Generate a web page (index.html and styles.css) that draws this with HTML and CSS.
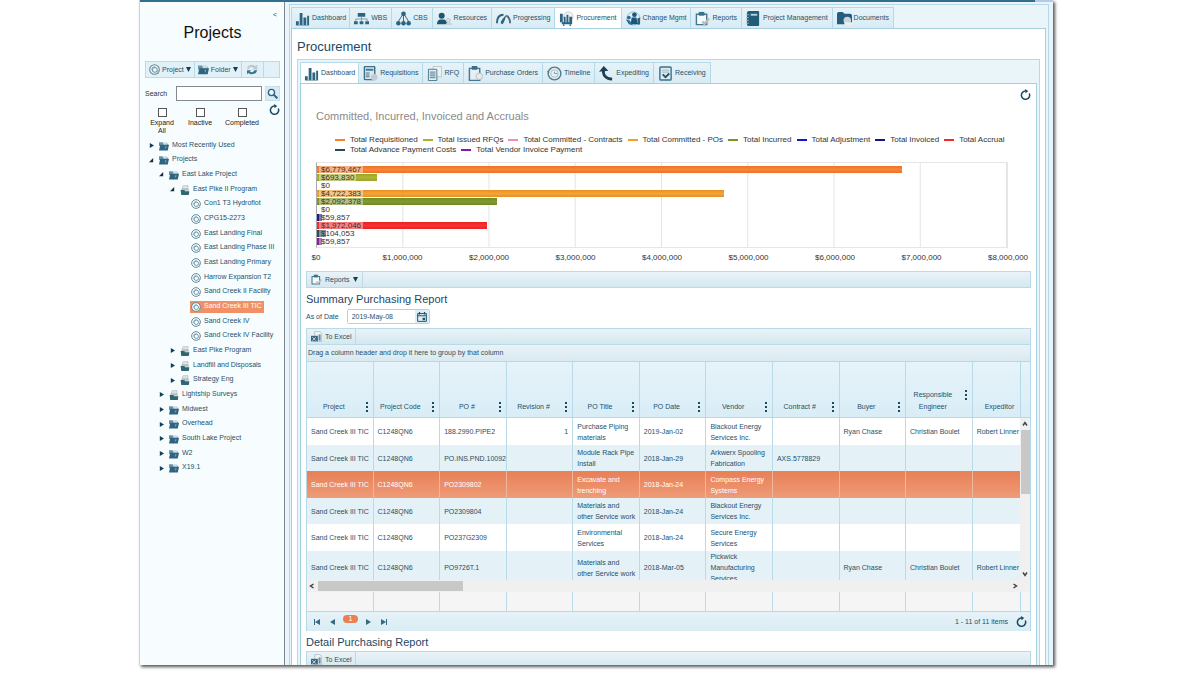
FILE: index.html
```html
<!DOCTYPE html>
<html lang="en">
<head>
<meta charset="utf-8">
<title>Procurement</title>
<link rel="stylesheet" href="styles.css">
</head>
<body>
<svg class="defs" aria-hidden="true">
  <symbol id="i-bars" viewBox="0 0 16 16"><path fill="#2b6380" d="M1 11h3v4H1zM5 2h3v13H5zM9 7h3v8H9zM13 5h2v10h-2z"/><path fill="#8fb0bd" d="M1 15h14v1H1z"/></symbol>
  <symbol id="i-wbs" viewBox="0 0 16 16"><path fill="#2b6380" d="M4 2h8v4H4zM0 11h4v3H0zM6 11h4v3H6zM12 11h4v3h-4z"/><path fill="none" stroke="#7c98a5" d="M8 6v5M2 11V8.500h12V11"/></symbol>
  <symbol id="i-cbs" viewBox="0 0 16 16"><path fill="none" stroke="#2b6380" d="M8 4v8M7 4L2 12M9 4l5 8"/><circle cx="8" cy="3" r="2.500" fill="#2b6380"/><circle cx="2.500" cy="13" r="2.400" fill="#2b6380"/><circle cx="8" cy="13" r="2.400" fill="#2b6380"/><circle cx="13.500" cy="13" r="2.400" fill="#2b6380"/></symbol>
  <symbol id="i-res" viewBox="0 0 16 16"><circle cx="5" cy="5" r="3.200" fill="#1f566c"/><path fill="#1f566c" d="M0 14q0-5 4-5h3q3 0 4 5z"/><circle cx="12" cy="10" r="2" fill="#dce6ea" stroke="#aebfc7"/><path fill="#c8d6dc" d="M9 15q1-3 4-3t3 3z"/></symbol>
  <symbol id="i-prog" viewBox="0 0 16 16"><path fill="none" stroke="#2b6380" stroke-width="2" d="M1 13Q1 4 8 4"/><path fill="none" stroke="#567" stroke-width="2" d="M11 5q4 2 4 8"/><path fill="#2b6380" d="M5 13q0-3 6-9-2 8-4 10z"/></symbol>
  <symbol id="i-proc" viewBox="0 0 16 16"><circle cx="10" cy="6" r="5" fill="#f1f4f6" stroke="#c3ced4"/><path fill="#2b6380" d="M1 3h3v9H1zM5 6h2v6H5zM8 4h2v8H8zM11 6h3v6h-3zM3 12h11v2H3z"/><circle cx="5" cy="15" r="1" fill="#2b6380"/><circle cx="12" cy="15" r="1" fill="#2b6380"/></symbol>
  <symbol id="i-change" viewBox="0 0 16 16"><circle cx="8" cy="8" r="7" fill="none" stroke="#9fb9c6"/><circle cx="9" cy="4" r="2.500" fill="#1d557a"/><path fill="#1d557a" d="M5 14l1-7h5l2 7z"/><circle cx="3" cy="7" r="2" fill="#2b6d95"/><path fill="#2b6d95" d="M0 9l4 1 3 5-4-1z"/><path fill="#2b6380" d="M12 8l3-1v7l-2 1z"/></symbol>
  <symbol id="i-clip" viewBox="0 0 16 16"><path fill="#f4f9fb" stroke="#47768d" stroke-width="1.500" d="M1.500 3.500h11v11h-11z"/><path fill="#39708b" d="M4 1h6v4H4z"/><path fill="none" stroke="#b9bcc4" stroke-width="2.500" d="M8 11l2 3 5-6"/></symbol>
  <symbol id="i-book" viewBox="0 0 16 16"><path fill="#235c78" d="M3 0h10q1 0 1 1v14q0 1-1 1H3q-2 0-2-2V2q0-2 2-2z"/><path fill="#b9d5e2" d="M5 3h7v2H5z"/><path stroke="#9dbdcc" d="M0 4h3M0 7h3M0 10h3M0 13h3"/></symbol>
  <symbol id="i-docs" viewBox="0 0 16 16"><path fill="#235f7d" d="M0 3q0-2 2-2h4l2 2h6q2 0 2 2v9H0z"/><circle cx="11" cy="10" r="4" fill="#cdd4d9"/><path fill="#eceff1" d="M8 12h8v3H8z"/></symbol>
  <symbol id="i-form" viewBox="0 0 16 16"><rect x="1.500" y=".500" width="11" height="14" rx="1" fill="#d8e9f1" stroke="#3d7089" stroke-width="1.500"/><path fill="#49788f" d="M3 3h8v2H3zM3 7h4v1H3zM3 9h4v1H3zM3 11h4v1H3z"/><circle cx="12" cy="12" r="3.500" fill="#c3ccd2"/></symbol>
  <symbol id="i-rfq" viewBox="0 0 16 16"><path fill="#eef2f4" stroke="#bac6cc" d="M6.500.500h9v11h-9z"/><path fill="#e4f0f5" stroke="#47768d" d="M1.500 3.500h9v12h-9z"/><path stroke="#47768d" d="M3 6.500h6M3 8.500h6M3 10.500h6M3 12.500h6"/></symbol>
  <symbol id="i-po" viewBox="0 0 16 16"><path fill="#e4f0f5" stroke="#47768d" stroke-width="1.500" d="M1.500 2.500h11v13h-11z"/><path fill="#39708b" d="M4 0h6v4H4z"/><circle cx="12" cy="11" r="3.500" fill="#e8eaec" stroke="#b5bfc4"/></symbol>
  <symbol id="i-time" viewBox="0 0 16 16"><circle cx="8" cy="8" r="6.800" fill="none" stroke="#53788a" stroke-width="1.500"/><circle cx="8" cy="8" r="4" fill="#e6eff3" stroke="#a7bcc5"/><path fill="none" stroke="#7c98a5" d="M8 6v2h3"/><path fill="none" stroke="#53788a" d="M0 5l2 2"/></symbol>
  <symbol id="i-exp" viewBox="0 0 16 16"><path fill="none" stroke="#1f4054" stroke-width="3" d="M5 3q-2 10 9 11"/><path fill="#1f4054" d="M0 6l5-6 5 5z"/></symbol>
  <symbol id="i-recv" viewBox="0 0 16 16"><rect x="2" y="1" width="12" height="14" rx="1" fill="#dcebf2" stroke="#3d7089" stroke-width="1.500"/><path stroke="#a3bac5" d="M4 4.500h8M4 6.500h8"/><path fill="none" stroke="#1f566c" stroke-width="2" d="M5 9l3 3 4-4"/></symbol>
  <symbol id="i-refresh" viewBox="0 0 16 16"><path fill="none" stroke="#1a4a62" stroke-width="2.200" d="M8 3a6 6 0 1 0 5.500 3.500"/><path fill="#1a4a62" d="M7 0l5 3-4 3z"/></symbol>
  <symbol id="i-sync" viewBox="0 0 16 16"><path fill="#bfcad0" d="M0 7Q1 1 7 1q4 0 5 2l3-2v7H8l2-2Q7 3 4 5L2 8z"/><path fill="#3c7590" d="M15 9q-2 6-8 6-3 0-5-2l-2 2V9h6l-2 2q4 3 7-2z"/></symbol>
  <symbol id="i-proj" viewBox="0 0 16 16"><circle cx="8" cy="8" r="7" fill="#f4fafc" stroke="#5d8698" stroke-width="1.500"/><circle cx="8.500" cy="8.500" r="3.500" fill="none" stroke="#6d94a5" stroke-width="1.500"/><path fill="none" stroke="#8aa9b6" stroke-width="1.500" d="M4 9q0-5 5-5M13 9l1 5"/></symbol>
  <symbol id="i-folder" viewBox="0 0 16 16"><path fill="#6b93a7" d="M0 2h6l1 2h7v4H0z"/><path fill="#c8dde6" d="M7 2h6v5H7z"/><path fill="#2f647f" d="M2 6h14l-2 9H0z"/><path fill="#77a2b6" d="M9 9l3-1-1 5z"/></symbol>
  <symbol id="i-prog2" viewBox="0 0 16 16"><path fill="#dde4e8" stroke="#abb7bd" d="M5 1h8l-1 6H3z"/><path fill="#b5c0c6" d="M3 5h11v4H2z"/><path fill="#2f6670" d="M1 8h6l1 2h7l-1 6H2z"/></symbol>
  <symbol id="i-search" viewBox="0 0 16 16"><circle cx="6.500" cy="6.500" r="4.500" fill="#edf7fb" stroke="#2d6480" stroke-width="2"/><path stroke="#2d6480" stroke-width="3" d="M10 10l5 5"/></symbol>
  <symbol id="i-excel" viewBox="0 0 16 16"><path fill="#eef3f6" stroke="#9db0bb" d="M5.500.500h7l3 3v12h-10z"/><path fill="#376782" d="M0 7h10v8H0z"/><path stroke="#fff" d="M2 9l5 5M7 9l-5 5"/><path fill="#6d8da0" d="M11 5h3v9h-3z"/></symbol>
  <symbol id="i-cal" viewBox="0 0 16 16"><path fill="none" stroke="#1f4f66" stroke-width="1.500" d="M1 2.500h14v12.500H1zM1 6h14"/><path fill="#1f4f66" d="M3 0h2v4H3zM11 0h2v4h-2zM9 9h4v4H9z"/></symbol>
  <symbol id="i-dots" viewBox="0 0 3 10"><path fill="#1c475c" d="M0 0h2v2H0zM0 4h2v2H0zM0 8h2v2H0z"/></symbol>
  <symbol id="i-closed" viewBox="0 0 6 6"><path fill="#123f56" d="M1 0l5 3-5 3z"/></symbol>
  <symbol id="i-open" viewBox="0 0 6 6"><path fill="#12313f" d="M5 0v5H0z"/></symbol>
  <symbol id="i-down" viewBox="0 0 6 6"><path fill="#143f54" d="M0 0h6L3 6z"/></symbol>
  <symbol id="i-next" viewBox="0 0 8 6"><path fill="#356a81" d="M1 0l5 3-5 3z"/></symbol>
  <symbol id="i-last" viewBox="0 0 8 6"><path fill="#356a81" d="M0 0l5 3-5 3zM5 0h1v6H5z"/></symbol>
  <symbol id="i-chev" viewBox="0 0 6 6"><path fill="none" stroke="#444" stroke-width="1.500" d="M1 4.500l2-3 2 3"/></symbol>
</svg>

<div class="app">
  <div class="topbar"></div>
  <div class="columns">
    <aside class="sidebar">
      <button class="collapse" aria-label="Collapse">&lt;</button>
      <h1>Projects</h1>
      <div class="toolbar side-tools">
        <button class="tool"><svg><use href="#i-proj"/></svg>Project<svg class="caret"><use href="#i-down"/></svg></button>
        <button class="tool"><svg><use href="#i-folder"/></svg>Folder<svg class="caret"><use href="#i-down"/></svg></button>
        <button class="tool" aria-label="Refresh"><svg><use href="#i-sync"/></svg></button>
      </div>
      <div class="search">
        <label for="q">Search</label>
        <input id="q" type="text">
        <button aria-label="Search"><svg><use href="#i-search"/></svg></button>
      </div>
      <div class="filters">
        <label><input type="checkbox">Expand All</label>
        <label><input type="checkbox">Inactive</label>
        <label><input type="checkbox">Completed</label>
        <button class="plain" aria-label="Reload"><svg class="reload"><use href="#i-refresh"/></svg></button>
      </div>
      <ul class="tree">
        <li><svg class="arrow"><use href="#i-closed"/></svg><svg><use href="#i-folder"/></svg><span>Most Recently Used</span></li>
        <li><svg class="arrow"><use href="#i-open"/></svg><svg><use href="#i-folder"/></svg><span>Projects</span></li>
        <li class="d1"><svg class="arrow"><use href="#i-open"/></svg><svg><use href="#i-folder"/></svg><span>East Lake Project</span></li>
        <li class="d2"><svg class="arrow"><use href="#i-open"/></svg><svg><use href="#i-prog2"/></svg><span>East Pike II Program</span></li>
        <li class="d3"><svg><use href="#i-proj"/></svg><span>Con1 T3 Hydroflot</span></li>
        <li class="d3"><svg><use href="#i-proj"/></svg><span>CPG15-2273</span></li>
        <li class="d3"><svg><use href="#i-proj"/></svg><span>East Landing Final</span></li>
        <li class="d3"><svg><use href="#i-proj"/></svg><span>East Landing Phase III</span></li>
        <li class="d3"><svg><use href="#i-proj"/></svg><span>East Landing Primary</span></li>
        <li class="d3"><svg><use href="#i-proj"/></svg><span>Harrow Expansion T2</span></li>
        <li class="d3"><svg><use href="#i-proj"/></svg><span>Sand Creek II Facility</span></li>
        <li class="d3 current"><svg><use href="#i-proj"/></svg><span>Sand Creek III TIC</span></li>
        <li class="d3"><svg><use href="#i-proj"/></svg><span>Sand Creek IV</span></li>
        <li class="d3"><svg><use href="#i-proj"/></svg><span>Sand Creek IV Facility</span></li>
        <li class="d2"><svg class="arrow"><use href="#i-closed"/></svg><svg><use href="#i-prog2"/></svg><span>East Pike Program</span></li>
        <li class="d2"><svg class="arrow"><use href="#i-closed"/></svg><svg><use href="#i-prog2"/></svg><span>Landfill and Disposals</span></li>
        <li class="d2"><svg class="arrow"><use href="#i-closed"/></svg><svg><use href="#i-prog2"/></svg><span>Strategy Eng</span></li>
        <li class="d1"><svg class="arrow"><use href="#i-closed"/></svg><svg><use href="#i-prog2"/></svg><span>Lightship Surveys</span></li>
        <li class="d1"><svg class="arrow"><use href="#i-closed"/></svg><svg><use href="#i-folder"/></svg><span>Midwest</span></li>
        <li class="d1"><svg class="arrow"><use href="#i-closed"/></svg><svg><use href="#i-folder"/></svg><span>Overhead</span></li>
        <li class="d1"><svg class="arrow"><use href="#i-closed"/></svg><svg><use href="#i-folder"/></svg><span>South Lake Project</span></li>
        <li class="d1"><svg class="arrow"><use href="#i-closed"/></svg><svg><use href="#i-folder"/></svg><span>W2</span></li>
        <li class="d1"><svg class="arrow"><use href="#i-closed"/></svg><svg><use href="#i-folder"/></svg><span>X19.1</span></li>
      </ul>
    </aside>

    <main class="panel">
      <nav class="tabs">
        <button><svg><use href="#i-bars"/></svg>Dashboard</button>
        <button><svg><use href="#i-wbs"/></svg>WBS</button>
        <button><svg><use href="#i-cbs"/></svg>CBS</button>
        <button><svg><use href="#i-res"/></svg>Resources</button>
        <button><svg><use href="#i-prog"/></svg>Progressing</button>
        <button class="active"><svg><use href="#i-proc"/></svg>Procurement</button>
        <button><svg><use href="#i-change"/></svg>Change Mgmt</button>
        <button><svg><use href="#i-clip"/></svg>Reports</button>
        <button><svg><use href="#i-book"/></svg>Project Management</button>
        <button><svg><use href="#i-docs"/></svg>Documents</button>
      </nav>
      <div class="sheet outer">
        <h2>Procurement</h2>
        <section class="panel inner">
          <nav class="tabs">
            <button class="active"><svg><use href="#i-bars"/></svg>Dashboard</button>
            <button><svg><use href="#i-form"/></svg>Requisitions</button>
            <button><svg><use href="#i-rfq"/></svg>RFQ</button>
            <button><svg><use href="#i-po"/></svg>Purchase Orders</button>
            <button><svg><use href="#i-time"/></svg>Timeline</button>
            <button><svg><use href="#i-exp"/></svg>Expediting</button>
            <button><svg><use href="#i-recv"/></svg>Receiving</button>
          </nav>
          <div class="sheet body">
            <div class="refresh-row"><button class="plain" aria-label="Refresh"><svg class="reload"><use href="#i-refresh"/></svg></button></div>
            <div class="chart">
              <h3>Committed, Incurred, Invoiced and Accruals</h3>
              <ul class="legend">
                <li class="c1">Total Requisitioned</li><li class="c2">Total Issued RFQs</li><li class="c3">Total Committed - Contracts</li><li class="c4">Total Committed - POs</li><li class="c5">Total Incurred</li><li class="c6">Total Adjustment</li><li class="c7">Total Invoiced</li><li class="c8">Total Accrual</li><li class="c9">Total Advance Payment Costs</li><li class="c10">Total Vendor Invoice Payment</li>
              </ul>
              <div class="plot">
                <div class="bar c1" style="width:84.740%"><span>$6,779,467</span></div>
                <div class="bar c2" style="width:8.670%"><span>$693,830</span></div>
                <div class="bar c3" style="width:0%"><span>$0</span></div>
                <div class="bar c4" style="width:59.030%"><span>$4,722,383</span></div>
                <div class="bar c5" style="width:26.150%"><span>$2,092,378</span></div>
                <div class="bar c6" style="width:0%"><span>$0</span></div>
                <div class="bar c7" style="width:0.750%"><span>$59,857</span></div>
                <div class="bar c8" style="width:24.650%"><span>$1,972,046</span></div>
                <div class="bar c9" style="width:1.300%"><span>$104,053</span></div>
                <div class="bar c10" style="width:0.750%"><span>$59,857</span></div>
              </div>
              <div class="axis"><span>$0</span><span>$1,000,000</span><span>$2,000,000</span><span>$3,000,000</span><span>$4,000,000</span><span>$5,000,000</span><span>$6,000,000</span><span>$7,000,000</span><span>$8,000,000</span></div>
            </div>
            <div class="toolbar"><button class="tool"><svg><use href="#i-clip"/></svg>Reports<svg class="caret"><use href="#i-down"/></svg></button></div>
            <h3 class="report-title">Summary Purchasing Report</h3>
            <div class="asof">
              <label for="asof">As of Date</label>
              <span class="datebox"><input id="asof" type="text" value="2019-May-08"><button aria-label="Open calendar"><svg><use href="#i-cal"/></svg></button></span>
            </div>
            <div class="toolbar"><button class="tool"><svg><use href="#i-excel"/></svg>To Excel</button></div>
            <div class="grid">
              <div class="groupbar">Drag a column header and drop it here to group by that column</div>
              <div class="grid-head">
                <div class="clip">
                  <table>
                    <thead><tr>
                      <th><div><span>Project</span><button aria-label="Menu"><svg><use href="#i-dots"/></svg></button></div></th>
                      <th><div><span>Project Code</span><button aria-label="Menu"><svg><use href="#i-dots"/></svg></button></div></th>
                      <th><div><span>PO #</span><button aria-label="Menu"><svg><use href="#i-dots"/></svg></button></div></th>
                      <th><div><span>Revision #</span><button aria-label="Menu"><svg><use href="#i-dots"/></svg></button></div></th>
                      <th><div><span>PO Title</span><button aria-label="Menu"><svg><use href="#i-dots"/></svg></button></div></th>
                      <th><div><span>PO Date</span><button aria-label="Menu"><svg><use href="#i-dots"/></svg></button></div></th>
                      <th><div><span>Vendor</span><button aria-label="Menu"><svg><use href="#i-dots"/></svg></button></div></th>
                      <th><div><span>Contract #</span><button aria-label="Menu"><svg><use href="#i-dots"/></svg></button></div></th>
                      <th><div><span>Buyer</span><button aria-label="Menu"><svg><use href="#i-dots"/></svg></button></div></th>
                      <th><div><span>Responsible Engineer</span><button aria-label="Menu"><svg><use href="#i-dots"/></svg></button></div></th>
                      <th><div><span>Expeditor</span><button aria-label="Menu"><svg><use href="#i-dots"/></svg></button></div></th>
                    </tr></thead>
                  </table>
                </div>
                <div class="corner"></div>
              </div>
              <div class="grid-body">
                <div class="clip">
                  <table>
                    <tbody>
                      <tr><td>Sand Creek III TIC</td><td>C1248QN6</td><td>188.2990.PIPE2</td><td class="num">1</td><td class="wrap">Purchase Piping materials</td><td>2019-Jan-02</td><td class="wrap">Blackout Energy Services Inc.</td><td></td><td>Ryan Chase</td><td>Christian Boulet</td><td>Robert Linner</td></tr>
                      <tr><td>Sand Creek III TIC</td><td>C1248QN6</td><td>PO.INS.PND.10092</td><td></td><td class="wrap">Module Rack Pipe Install</td><td>2018-Jan-29</td><td class="wrap">Arkwerx Spooling Fabrication</td><td>AXS.5778829</td><td></td><td></td><td></td></tr>
                      <tr class="selected"><td>Sand Creek III TIC</td><td>C1248QN6</td><td>PO2309802</td><td></td><td class="wrap">Excavate and trenching</td><td>2018-Jan-24</td><td class="wrap">Compass Energy Systems</td><td></td><td></td><td></td><td></td></tr>
                      <tr><td>Sand Creek III TIC</td><td>C1248QN6</td><td>PO2309804</td><td></td><td class="wrap">Materials and other Service work</td><td>2018-Jan-24</td><td class="wrap">Blackout Energy Services Inc.</td><td></td><td></td><td></td><td></td></tr>
                      <tr><td>Sand Creek III TIC</td><td>C1248QN6</td><td>PO237G2309</td><td></td><td class="wrap">Environmental Services</td><td>2018-Jan-24</td><td class="wrap">Secure Energy Services</td><td></td><td></td><td></td><td></td></tr>
                      <tr><td>Sand Creek III TIC</td><td>C1248QN6</td><td>PO9726T.1</td><td></td><td class="wrap">Materials and other Service work</td><td>2018-Mar-05</td><td class="wrap">Pickwick Manufacturing Services</td><td></td><td>Ryan Chase</td><td>Christian Boulet</td><td>Robert Linner</td></tr>
                    </tbody>
                  </table>
                </div>
                <div class="vscroll"><svg><use href="#i-chev"/></svg><i></i><svg class="flip"><use href="#i-chev"/></svg></div>
              </div>
              <div class="hscroll"><svg class="left"><use href="#i-chev"/></svg><i></i><svg class="right"><use href="#i-chev"/></svg></div>
              <div class="grid-foot">
                <div class="clip"><table><tbody><tr><td></td><td></td><td></td><td></td><td></td><td></td><td></td><td></td><td></td><td></td><td></td></tr></tbody></table></div>
                <div class="corner"></div>
              </div>
              <div class="pager">
                <button aria-label="First page"><svg class="mirror"><use href="#i-last"/></svg></button>
                <button aria-label="Previous page"><svg class="mirror"><use href="#i-next"/></svg></button>
                <button class="page">1</button>
                <button aria-label="Next page"><svg><use href="#i-next"/></svg></button>
                <button aria-label="Last page"><svg><use href="#i-last"/></svg></button>
                <span class="count">1 - 11 of 11 items</span>
                <button class="plain" aria-label="Refresh"><svg class="reload"><use href="#i-refresh"/></svg></button>
              </div>
            </div>
            <h3 class="report-title">Detail Purchasing Report</h3>
            <div class="toolbar"><button class="tool"><svg><use href="#i-excel"/></svg>To Excel</button></div>
          </div>
        </section>
      </div>
    </main>
  </div>
</div>
</body>
</html>
```

FILE: styles.css
```css
* { box-sizing: border-box; }

body {
  margin: 0;
  height: 100vh;
  padding: 0 147px 10px 139px;
  background: #fff;
  color: #1f5068;
  font: 7px/10px "Liberation Sans", Arial, sans-serif;
  overflow: hidden;
}

button, input { font: inherit; color: inherit; margin: 0; }
button { border: 0; padding: 0; background: none; display: flex; align-items: center; justify-content: center; }
h1, h2, h3, ul { margin: 0; padding: 0; font-weight: normal; list-style: none; }
svg { flex: none; display: block; }
.defs { display: none; }

.app {
  height: 100%;
  display: flex;
  flex-direction: column;
  overflow: hidden;
  background: #fff;
  border-left: 1px solid #c3d2ee;
  box-shadow: 2px 2px 3px #555;
}
.topbar { flex: none; height: 2px; background: linear-gradient(90deg, #326e8e 98%, #b8c8e8 98%); }
.columns { flex: 1; min-height: 0; display: flex; gap: 4px; background: #eaf4fa; padding-right: 4px; }

/* Project sidebar */
.sidebar {
  flex: none;
  width: 145px;
  padding: 8px 4px 0 5px;
  background: #f7fdfe;
  border-right: 1px solid #7b8791;
}
.collapse { margin-left: auto; padding-right: 3px; color: #345; }
.sidebar h1 { padding: 3px 0 18px; text-align: center; font-size: 16px; line-height: 20px; color: #111; }

.toolbar {
  display: flex;
  height: 17px;
  border: 1px solid #b9dbe8;
  background: linear-gradient(#e9f3f8, #d5e8f0);
}
.tool { gap: 3px; padding: 0 4px; border-right: 1px solid #b9dbe8; }
.tool svg { width: 11px; height: 11px; }
.tool .caret { width: 5px; height: 5px; }
.side-tools { background: #e1f1f7; }
.side-tools .tool { gap: 2px; padding: 0 3px; }
.side-tools .tool:last-child { padding: 0 5px; }

.search { display: flex; align-items: center; margin-top: 8px; color: #333; }
.search label { width: 31px; }
.search input { flex: 1; min-width: 0; height: 15px; border: 1px solid #808a90; background: #fff; padding: 0 3px; }
.search button { width: 15px; height: 15px; margin-left: 3px; background: #d9ecf4; border: 1px solid #c2e0ec; }
.search svg { width: 11px; height: 11px; }

.filters { display: flex; align-items: flex-start; margin: 3px 0; color: #222; line-height: 8px; }
.filters label { width: 42px; padding-top: 4px; display: flex; flex-direction: column; align-items: center; gap: 2px; text-align: center; }
.filters label:first-child { width: 34px; padding-left: 3px; padding-right: 3px; }
.filters input { appearance: none; width: 9px; height: 9px; border: 1px solid #555; background: #fff; }
.filters .plain { margin-left: auto; }
.reload { width: 11px; height: 11px; overflow: visible; }

.tree { display: flex; flex-direction: column; margin-left: 4px; }
.tree li { height: 15px; display: flex; align-items: center; white-space: nowrap; }
.tree li:nth-child(3n+2) { height: 14px; }
.tree svg { width: 10px; height: 10px; margin-right: 3px; }
.tree .arrow { width: 5px; height: 5px; margin-right: 5px; }
.tree span { padding-bottom: 2px; }
.tree .d1 { padding-left: 10px; }
.tree .d2 { padding-left: 21px; }
.tree .d3 { padding-left: 42px; }
.tree .current { background: linear-gradient(#ef9067, #ef9067) 41px center / 74px 12px no-repeat; color: #fff; }

/* Tabbed panels */
.panel { display: flex; flex-direction: column; border: 1px solid #b4d9e8; border-bottom: 0; background: #eaf5fa; }
main.panel { flex: 1; min-width: 0; margin-top: 2px; padding: 2px 2px 0 1px; }
.panel.inner { margin: 3px 5px 0 5px; padding: 2px 2px 0 2px; }
.tabs { flex: none; display: flex; height: 22px; margin-bottom: -1px; }
.tabs button {
  gap: 2px;
  padding: 0 4px;
  white-space: nowrap;
  background: linear-gradient(#e6f3f9, #d8ebf4);
  border: 1px solid #b4d9e8;
  border-left-width: 0;
}
.tabs button:first-child { border-left-width: 1px; padding: 0 3px; }
.tabs .active { background: #fff; border-bottom-color: #fff; }
.tabs svg { width: 15px; height: 15px; }
.sheet { border: 1px solid #a5cfe0; border-bottom: 0; background: #fff; }
.outer h2 { padding: 9px 5px 0; font-size: 13px; line-height: 18px; color: #1c4763; }
.body { padding: 0 5px; }
.refresh-row { display: flex; justify-content: flex-end; padding: 5px 0 0; }

/* Chart */
.chart { padding: 9px 23px 8px 10px; color: #333; font-size: 8px; }
.chart h3 { font-size: 11px; line-height: 14px; color: #8a8a8a; }
.legend { display: flex; flex-wrap: wrap; column-gap: 5px; padding: 12px 0 0 19px; }
.legend li { display: flex; align-items: center; gap: 5px; line-height: 10px; white-space: nowrap; }
.legend li::before { content: ""; width: 10px; height: 2px; background: var(--c); }
.plot {
  display: flex;
  flex-direction: column;
  gap: 1px;
  margin-top: 7px;
  padding: 3px 0 2px;
  border: 1px solid #e6e6e6;
  border-left-color: #aaa;
  background: linear-gradient(90deg, transparent calc(100% - 1px), #e4e4e4 0) 0 0 / 12.500% 100%;
}
.bar { height: 7px; display: flex; align-items: center; background: linear-gradient(rgba(0, 0, 0, .08), rgba(255, 255, 255, .05) 50%, rgba(0, 0, 0, .08)) var(--c); }
.bar span { flex: none; height: 7px; line-height: 8px; margin-left: 2px; padding: 0 2px; background: rgba(255, 255, 255, .4); }
.axis { display: flex; justify-content: space-between; padding-top: 5px; }
.axis span { width: 0; display: flex; justify-content: center; }
.c1 { --c: #fb7d2d; }
.c2 { --c: #a9b22c; }
.c3 { --c: #f08db0; }
.c4 { --c: #f79e2a; }
.c5 { --c: #7b9424; }
.c6 { --c: #1414d8; }
.c7 { --c: #1b1480; }
.c8 { --c: #fa2528; }
.c9 { --c: #24485e; }
.c10 { --c: #851a9c; }

/* Reports */
.report-title { padding: 4px 0 2px; font-size: 11px; line-height: 14px; color: #1c4763; }
.body > .toolbar .tool { gap: 3px; padding: 0 4px; }
.asof { display: flex; align-items: center; gap: 8px; margin: 1px 0 4px; }
.datebox { display: flex; width: 83px; height: 15px; border: 1px solid #b4d3e0; border-radius: 2px; }
.datebox input { flex: 1; min-width: 0; border: 0; padding: 0 4px; background: #fff; }
.datebox button { width: 14px; background: #dceef6; }
.datebox svg { width: 10px; height: 10px; }

.grid { border: 1px solid #b4d9e8; border-width: 0 1px; }
.groupbar { height: 17px; padding: 3px 1px; background: linear-gradient(#e9f3f8, #d9e9f0); border-bottom: 1px solid #b4d9e8; }
.grid-head, .grid-body, .grid-foot { display: flex; }
.clip { flex: 1; min-width: 0; overflow: hidden; }
.corner { width: 10px; border-left: 1px solid #b4d9e8; }
table { width: 102.700%; table-layout: fixed; border-collapse: separate; border-spacing: 0; }
th, td { padding: 0; border-right: 1px solid #b9dae6; font-weight: normal; }
.grid-head { height: 56px; background: linear-gradient(#e6f3fa, #d9edf6); border-bottom: 1px solid #b4d9e8; }
th { height: 55px; vertical-align: bottom; padding: 0 4px 4px 3px; line-height: 12px; }
th div { display: flex; align-items: flex-start; }
th span { flex: 1; min-width: 0; padding-right: 8px; text-align: center; }
th svg { width: 3px; height: 10px; margin-top: 1px; }

.grid-body { height: 162px; }
td { height: 27px; padding: 2px 1px 2px 4px; line-height: 11px; white-space: nowrap; overflow: hidden; }
.grid-body tr:nth-child(even) td { height: 26px; background: #e4f1f7; }
.grid-body tr:nth-child(6) td { height: 35px; padding-top: 0; }
.grid-body .wrap { padding-right: 3px; white-space: normal; }
.grid-body .num { text-align: right; padding-right: 4px; }
.grid-body .selected td { background: linear-gradient(#e87f57, #ee9c78); color: #fff; border-right-color: #efb79e; }

.vscroll { width: 10px; display: flex; flex-direction: column; align-items: center; gap: 3px; padding: 3px 0; background: #f0f0f0; }
.vscroll i { width: 9px; height: 64px; margin-bottom: auto; background: #c8c8c8; }
.vscroll svg, .hscroll svg { width: 6px; height: 6px; }
.flip { transform: rotate(180deg); }
.hscroll { height: 12px; display: flex; align-items: center; gap: 3px; padding: 0 12px 0 2px; background: #f0f0f0; }
.hscroll i { width: 145px; height: 10px; background: #c8c8c8; }
.left { transform: rotate(-90deg); }
.right { transform: rotate(90deg); margin-left: auto; }
.grid-foot { height: 20px; background: #f5f5f5; border-bottom: 1px solid #b4d9e8; }
.grid-foot td { height: 19px; }

.pager { display: flex; align-items: center; gap: 8px; height: 19px; padding: 0 3px 0 5px; background: linear-gradient(#e6f2f8, #d9ecf4); }
.pager svg { width: 8px; height: 6px; }
.pager .reload { width: 11px; height: 11px; }
.mirror { transform: scaleX(-1); }
.pager .page { width: 15px; height: 8px; margin: 0 -1px 6px; border-radius: 4px; background: #ec7f52; color: #fff; }
.count { margin-left: auto; }
```
